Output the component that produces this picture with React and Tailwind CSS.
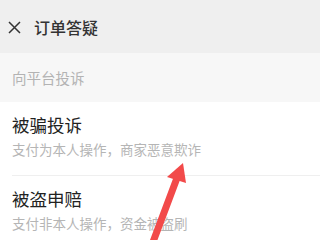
import React from 'react';

function Row({ title, desc, divider }) {
  return (
    <div className="bg-white pl-3">
      <div className={`pt-3 pb-[17px] ${divider ? 'border-b border-[#efefef]' : ''}`}>
        <div className="text-[17.5px] leading-[22px] text-[#222]">{title}</div>
        <div className="mt-1 text-[13.5px] leading-[18px] text-[#b5b5b5]">{desc}</div>
      </div>
    </div>
  );
}

export default function App() {
  return (
    <div
      className="relative w-[320px] h-[240px] overflow-hidden bg-white"
      style={{ fontFamily: '"Noto Sans CJK SC", "Noto Sans", sans-serif' }}
    >
      <div className="h-[53px] bg-[#efefef] flex items-center pl-2">
        <svg width="13" height="13" viewBox="0 0 13 13" className="mt-[1px]">
          <path d="M1 1L12 12M12 1L1 12" stroke="#333" strokeWidth="1.5" fill="none" />
        </svg>
        <span className="ml-[13px] text-[16px] font-medium text-[#333]">订单答疑</span>
      </div>
      <div className="h-[49px] bg-[#f7f7f7] flex items-center pl-3 text-[14.5px] text-[#b3b3b3]">
        向平台投诉
      </div>
      <Row title="被骗投诉" desc="支付为本人操作，商家恶意欺诈" divider />
      <Row title="被盗申赔" desc="支付非本人操作，资金被盗刷" />

      <svg className="absolute left-0 top-0" width="320" height="240" viewBox="0 0 320 240">
        <path d="M153 242L177 178" stroke="#f24a4a" strokeWidth="7" strokeLinecap="round" fill="none" />
        <path d="M183 163L167 177L186 183Z" fill="#f24a4a" />
      </svg>
    </div>
  );
}
